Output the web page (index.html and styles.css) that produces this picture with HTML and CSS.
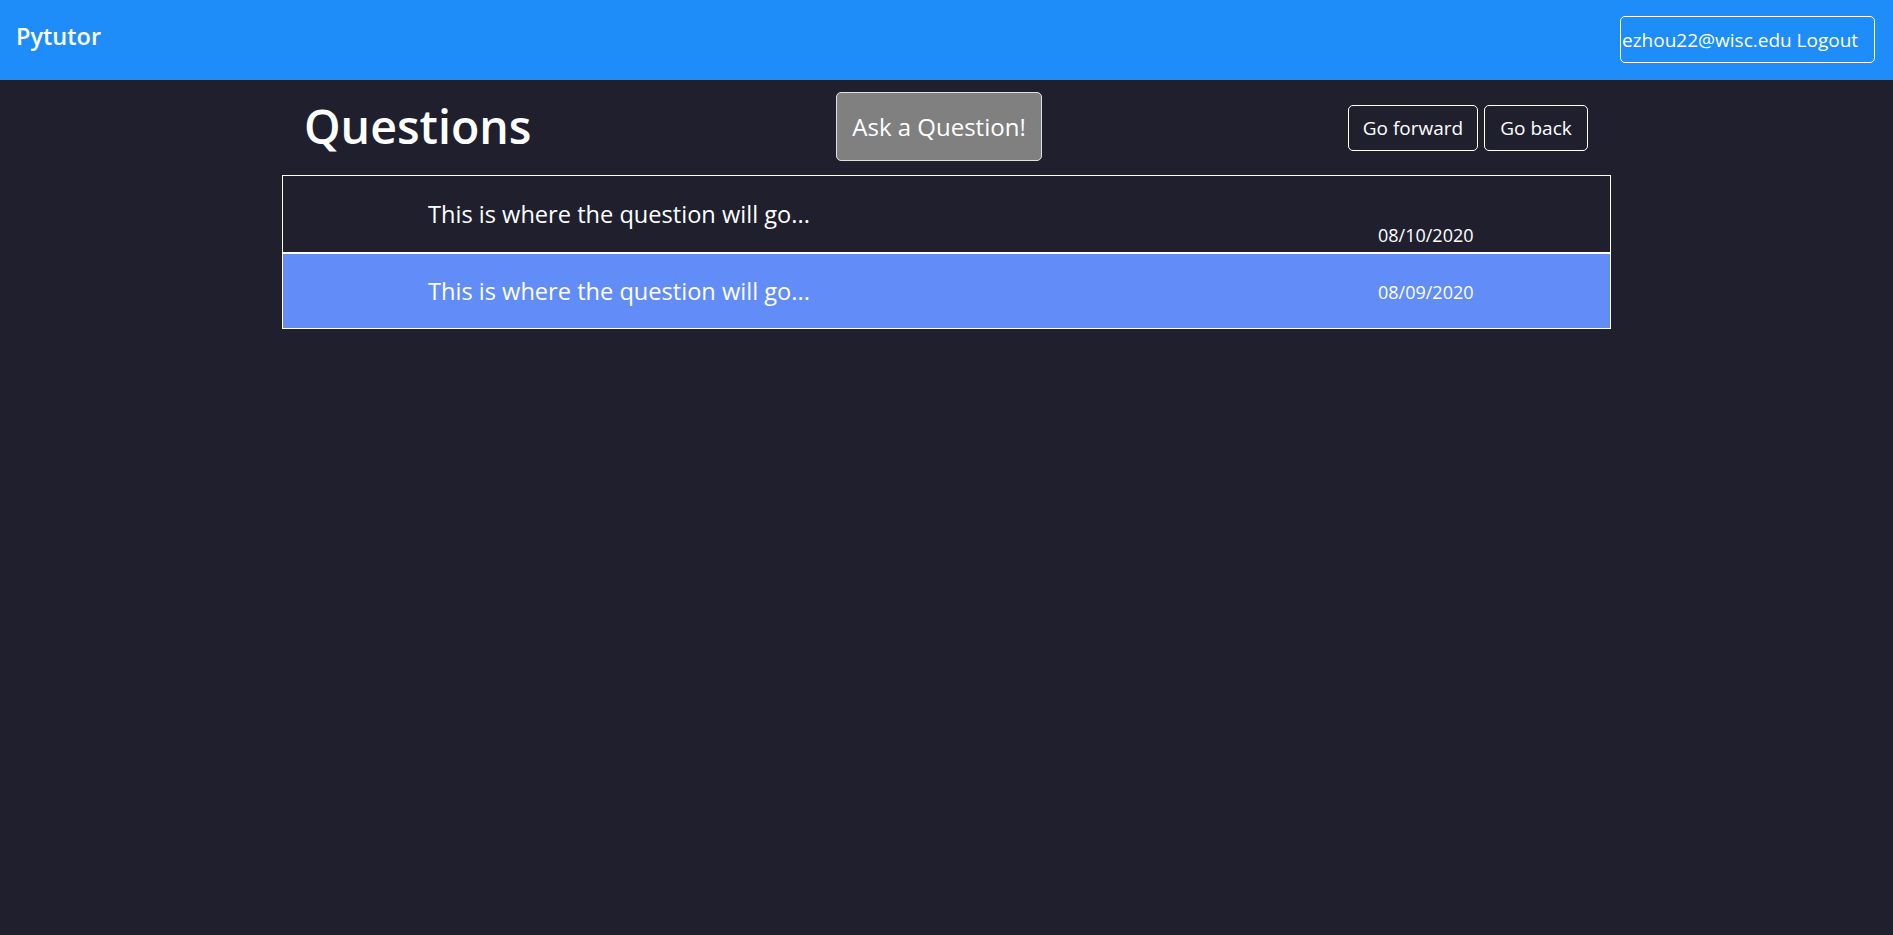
FILE: index.html
```html
<!DOCTYPE html>
<html lang="en">
<head>
<meta charset="utf-8">
<title>Pytutor</title>
<link rel="stylesheet" href="styles.css">
</head>
<body>
<nav class="navbar">
  <a class="brand" href="#">Pytutor</a>
  <button class="btn-logout">ezhou22@wisc.edu Logout</button>
</nav>
<main class="container">
  <div class="header-row">
    <h1 class="title">Questions</h1>
    <button class="btn-ask">Ask a Question!</button>
    <div class="pager">
      <button class="btn-outline btn-forward">Go forward</button>
      <button class="btn-outline btn-back">Go back</button>
    </div>
  </div>
  <div class="question-list">
    <div class="question-row">
      <span class="q-text">This is where the question will go...</span>
      <span class="q-date q-date-low">08/10/2020</span>
    </div>
    <div class="question-row question-row-active">
      <span class="q-text">This is where the question will go...</span>
      <span class="q-date">08/09/2020</span>
    </div>
  </div>
</main>
</body>
</html>
```
FILE: styles.css
```css
* { box-sizing: border-box; }
html, body { margin: 0; padding: 0; }
body {
  background: #1f1f2e;
  color: #ffffff;
  font-family: "Open Sans", "Noto Sans", sans-serif;
  font-size: 19.2px;
  min-height: 935px;
}
button { font-family: inherit; color: #fff; cursor: pointer; }

.navbar {
  height: 80px;
  background: #1e8df9;
  display: flex;
  align-items: center;
  justify-content: space-between;
  padding: 0 18px 0 16px;
}
.brand {
  color: #fff;
  text-decoration: none;
  font-size: 23.5px;
  font-weight: 600;
  margin-top: -9px;
}
.btn-logout {
  width: 255px;
  height: 47px;
  background: transparent;
  border: 1px solid #ffffff;
  border-radius: 5px;
  font-size: 19px;
  padding: 0 0 0 1px;
  text-align: left;
  white-space: nowrap;
  overflow: visible;
  margin-top: -1px;
}

.container {
  width: 1329px;
  margin: 0 auto;
}
.header-row {
  display: grid;
  grid-template-columns: 554px 206px 1fr;
  align-items: center;
  padding-top: 12px;
  margin-bottom: 14px;
}
.title {
  margin: 0;
  padding-left: 22px;
  font-size: 46.5px;
  font-weight: 600;
  line-height: 1.2;
}
.btn-ask {
  width: 206px;
  height: 69px;
  background: #808080;
  border: 1px solid #e0e0e0;
  border-radius: 5px;
  font-size: 24px;
  padding: 0;
}
.pager {
  display: flex;
  justify-content: flex-end;
  gap: 6px;
  padding-right: 23px;
  margin-top: 3px;
}
.btn-outline {
  height: 46px;
  background: transparent;
  border: 1px solid #ffffff;
  border-radius: 5px;
  font-size: 19px;
  padding: 0;
}
.btn-forward { width: 130px; }
.btn-back { width: 104px; }

.question-list {
  border: 1px solid #ffffff;
}
.question-row {
  display: grid;
  grid-template-columns: 1fr 232px;
  align-items: center;
  height: 76px;
  padding-left: 145px;
}
.question-row + .question-row {
  border-top: 2px solid #ffffff;
}
.question-row-active {
  background: #628df9;
}
.q-text {
  font-size: 23.6px;
}
.q-date {
  font-size: 18px;
  padding-top: 2px;
}
.q-date-low {
  padding-top: 42px;
}
```
